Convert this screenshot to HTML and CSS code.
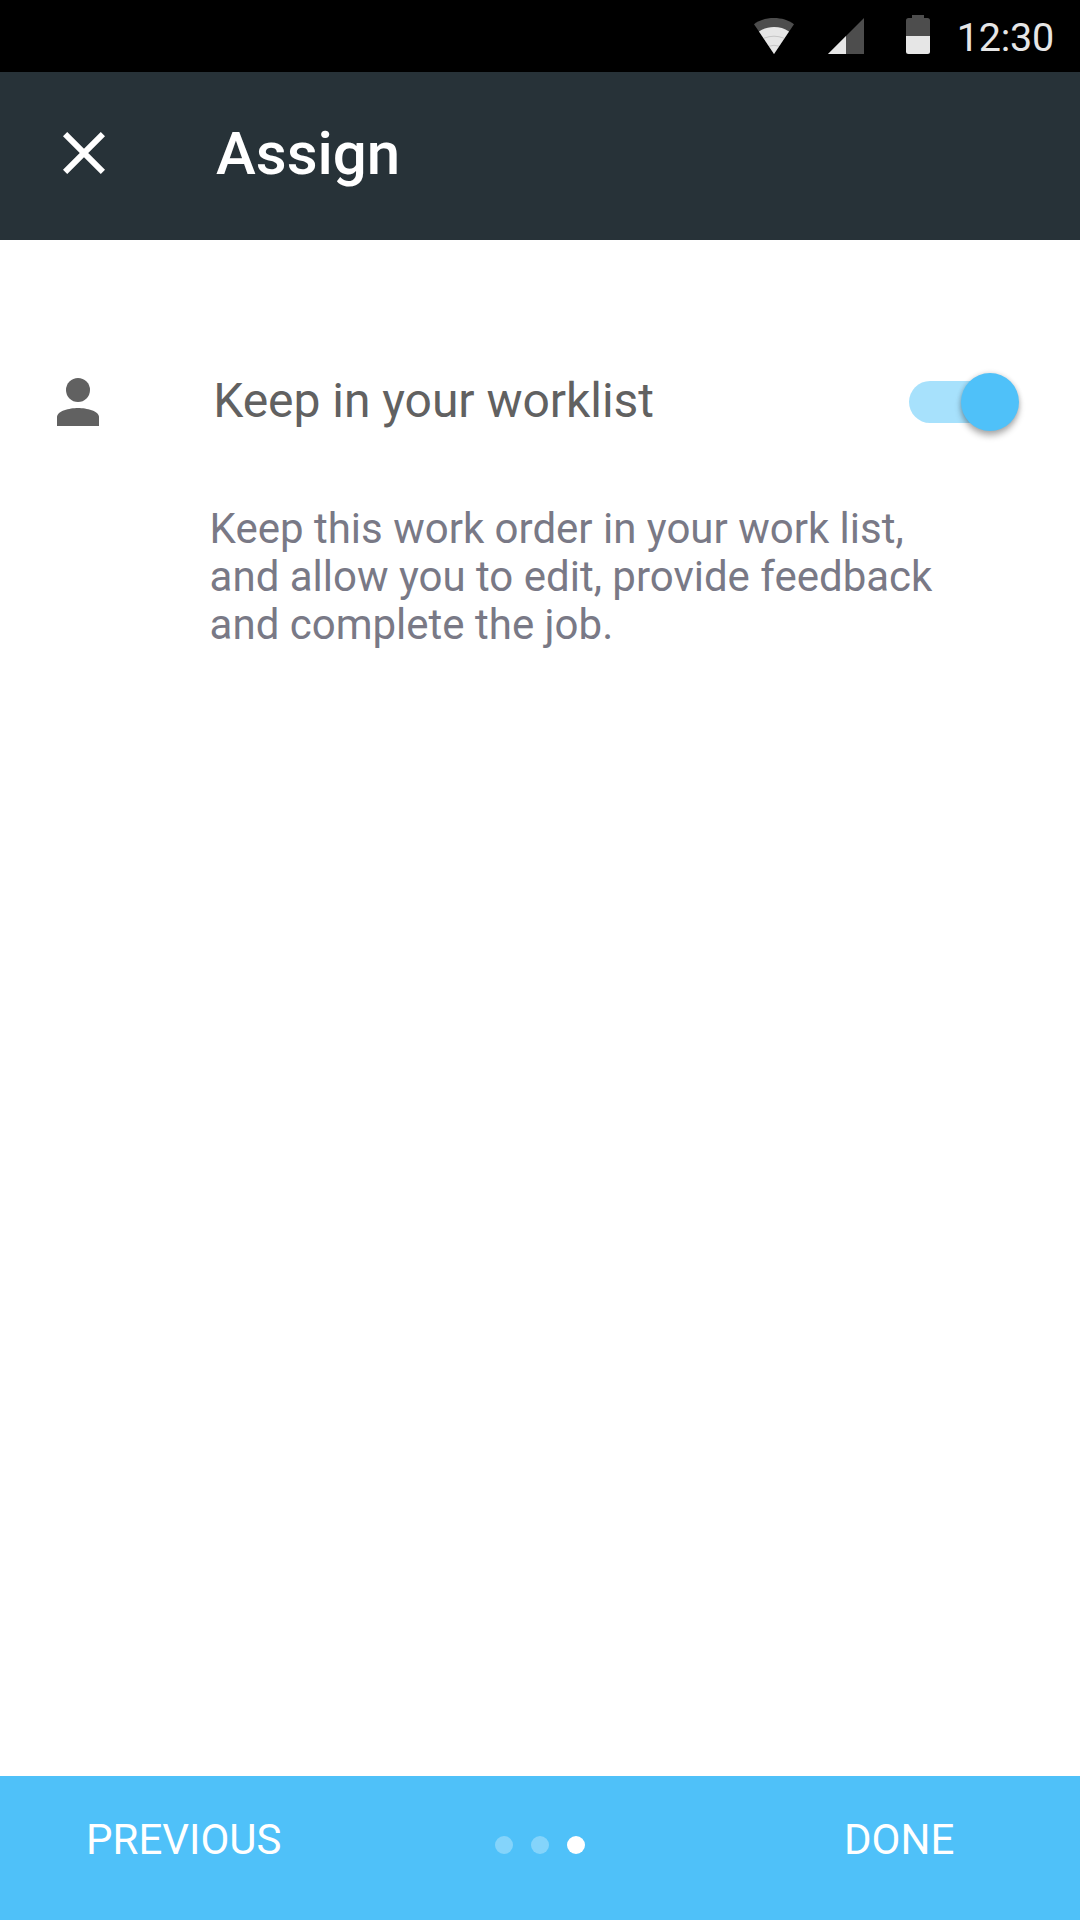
FILE: index.html
```html
<!DOCTYPE html>
<html lang="en">
<head>
  <meta charset="utf-8">
  <title>Assign</title>
  <link rel="stylesheet" href="styles.css">
</head>
<body>
  <div class="screen">
    <div class="status-bar">
      <svg class="wifi" width="40" height="36" viewBox="0 0 40 36" aria-hidden="true">
        <path fill="#4d4d4d" d="M0 6.200C5.500 2 12.500 0 20 0s14.500 2 20 6.200L20 36z"/>
        <path fill="#e6e6e6" d="M5 13.400C9.500 10.500 14.500 9 20 9s10.500 1.500 15 4.400L20 36z"/>
        <path fill="none" stroke="#bdbdbd" stroke-width="0.800" d="M10 20.200q10-4 20 0M15 28.200q5-1.800 10 0"/>
      </svg>
      <svg class="signal" width="36" height="36" viewBox="0 0 36 36" aria-hidden="true">
        <path fill="#4d4d4d" d="M36 0v36H0z"/>
        <path fill="#e6e6e6" d="M18 18v18H0z"/>
      </svg>
      <svg class="battery" width="24" height="39" viewBox="0 0 24 39" aria-hidden="true">
        <path fill="#4d4d4d" d="M6 0h12v3h3.500A2.500 2.500 0 0 1 24 5.500V21H0V5.500A2.500 2.500 0 0 1 2.500 3H6z"/>
        <path fill="#e6e6e6" d="M0 21h24v15.500a2.500 2.500 0 0 1-2.500 2.500h-19A2.500 2.500 0 0 1 0 36.500z"/>
      </svg>
      <span class="clock">12:30</span>
    </div>

    <header class="app-bar">
      <button class="close" type="button" aria-label="Close">
        <svg width="42" height="42" viewBox="0 0 42 42">
          <path fill="none" stroke="#fff" stroke-width="6" d="M2.100 2.100l37.800 37.800M39.900 2.100L2.100 39.900"/>
        </svg>
      </button>
      <h1 class="title">Assign</h1>
    </header>

    <main class="content">
      <div class="setting">
        <svg class="person" width="42" height="48" viewBox="0 0 42 48" aria-hidden="true">
          <circle cx="21" cy="12" r="12"/>
          <path d="M0 48V39C0 33 12.500 30 21 30s21 3 21 9v9z"/>
        </svg>
        <span class="label">Keep in your worklist</span>
        <span class="switch" role="switch" aria-checked="true"><span class="thumb"></span></span>
      </div>
      <p class="description">Keep this work order in your work list,<br>and allow you to edit, provide feedback<br>and complete the job.</p>
    </main>

    <footer class="stepper">
      <button class="step-button previous" type="button">PREVIOUS</button>
      <div class="dots">
        <span class="dot"></span>
        <span class="dot"></span>
        <span class="dot active"></span>
      </div>
      <button class="step-button done" type="button">DONE</button>
    </footer>
  </div>
</body>
</html>
```
FILE: styles.css
```css
* {
  box-sizing: border-box;
}

body {
  margin: 0;
  font-family: Roboto, sans-serif;
}

button {
  margin: 0;
  padding: 0;
  border: 0;
  background: none;
  color: inherit;
  font: inherit;
}

svg {
  display: block;
  flex: none;
}

.screen {
  display: flex;
  flex-direction: column;
  width: 1080px;
  height: 1920px;
  background: #fff;
}

.status-bar {
  display: flex;
  align-items: flex-start;
  height: 72px;
  padding: 15px 0 0 754px;
  background: #000;
  color: #e6e6e6;
}

.wifi {
  margin-top: 3px;
}

.signal {
  margin: 3px 0 0 34px;
}

.battery {
  margin-left: 42px;
}

.clock {
  margin-left: 26.8px;
  font-size: 39.5px;
  letter-spacing: -0.25px;
  line-height: 46px;
}

.app-bar {
  display: flex;
  align-items: flex-start;
  height: 168px;
  padding: 42px 0 0 63px;
  background: #273238;
  color: #fff;
}

.close {
  display: flex;
  margin-top: 18px;
}

.title {
  margin: 0 0 0 111px;
  font-size: 60px;
  font-weight: 500;
  line-height: 79px;
}

.content {
  flex: 1;
  padding: 132px 61px 0 56.6px;
}

.setting {
  display: flex;
  align-items: center;
  height: 60px;
}

.person {
  fill: #616161;
}

.label {
  margin: -3px auto 0 114.6px;
  color: #616161;
  font-size: 48px;
  letter-spacing: -0.04px;
  line-height: 57px;
}

.switch {
  display: flex;
  align-items: center;
  justify-content: flex-end;
  width: 110px;
  height: 42px;
  background: linear-gradient(#a7e1fc, #a7e1fc) left / 90px 100% no-repeat;
  border-radius: 21px;
}

.thumb {
  width: 58px;
  height: 58px;
  flex: none;
  border-radius: 50%;
  background: #4fc1f9;
  box-shadow: 0 5px 6px rgba(0, 0, 0, 0.28), 0 0 5px rgba(0, 0, 0, 0.16);
}

.description {
  margin: 73px 0 0 153px;
  color: #797986;
  font-size: 42px;
  line-height: 48px;
}

.stepper {
  display: flex;
  align-items: flex-start;
  height: 144px;
  padding: 39px 0 0 86px;
  background: #4fc1f9;
  color: #fff;
}

.step-button {
  font-size: 42px;
  line-height: 49px;
}

.previous {
  width: 409px;
  text-align: left;
}

.dots {
  display: flex;
  gap: 18px;
  margin: 21px 259px 0 0;
}

.dot {
  width: 18px;
  height: 18px;
  border-radius: 50%;
  background: #84d4fb;
}

.dot.active {
  background: #fff;
}
```
